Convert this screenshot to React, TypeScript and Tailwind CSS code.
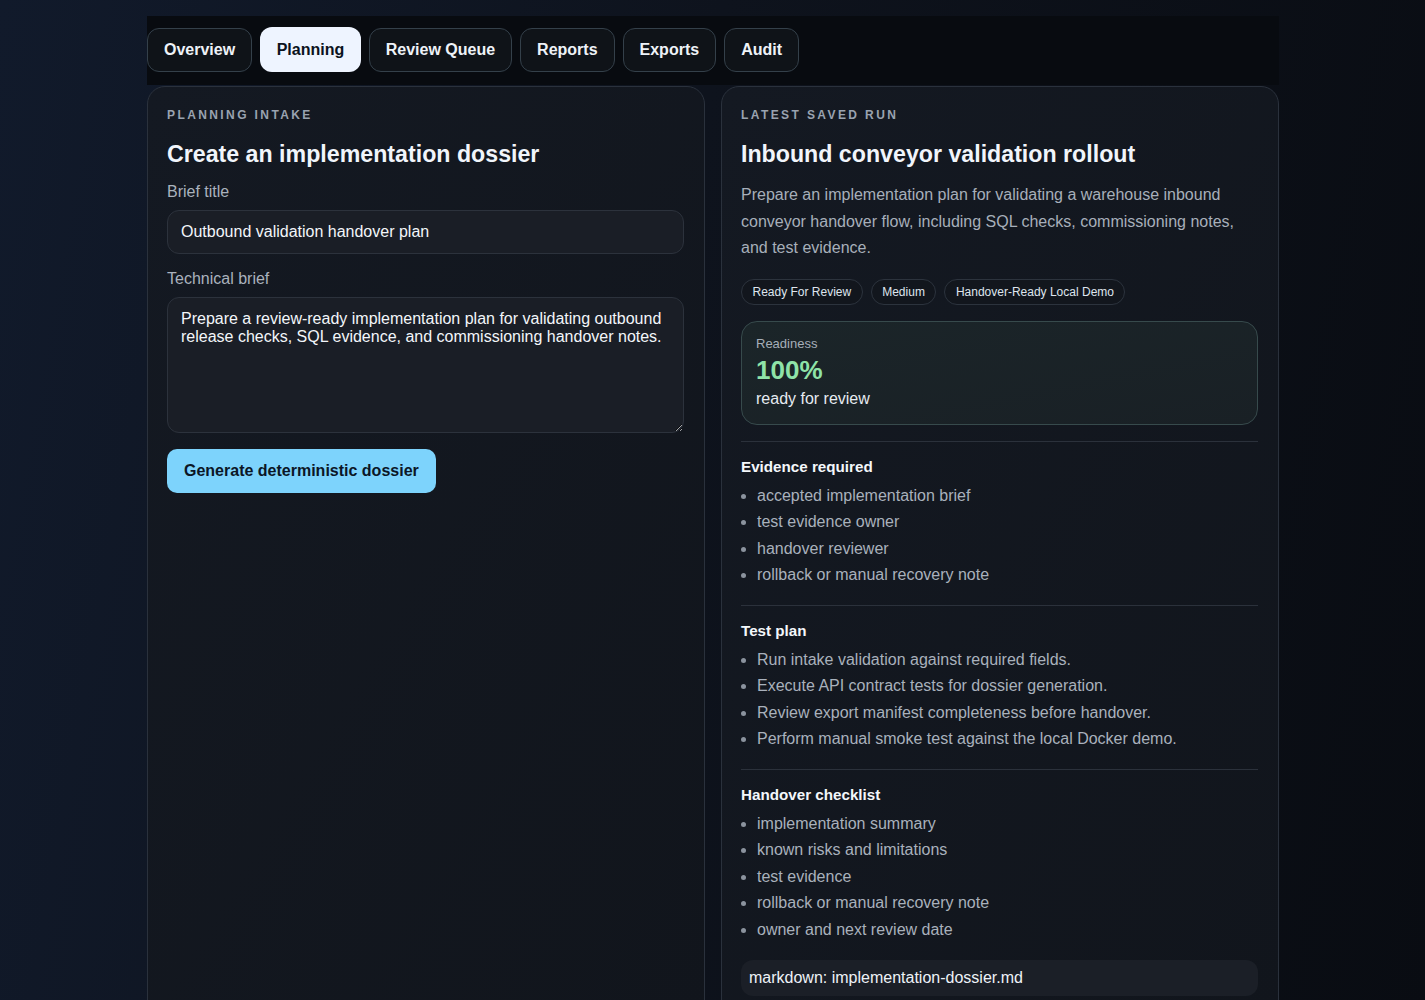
import type { ReactNode } from "react";

const TABS = ["Overview", "Planning", "Review Queue", "Reports", "Exports", "Audit"];
const ACTIVE = "Planning";

const SECTIONS: { title: string; items: string[] }[] = [
  {
    title: "Evidence required",
    items: [
      "accepted implementation brief",
      "test evidence owner",
      "handover reviewer",
      "rollback or manual recovery note",
    ],
  },
  {
    title: "Test plan",
    items: [
      "Run intake validation against required fields.",
      "Execute API contract tests for dossier generation.",
      "Review export manifest completeness before handover.",
      "Perform manual smoke test against the local Docker demo.",
    ],
  },
  {
    title: "Handover checklist",
    items: [
      "implementation summary",
      "known risks and limitations",
      "test evidence",
      "rollback or manual recovery note",
      "owner and next review date",
    ],
  },
];

function Panel({ children }: { children: ReactNode }) {
  return (
    <section className="rounded-[18px] border border-[#2a313c] bg-gradient-to-br from-[#141922] to-[#11151c] pt-5 pr-5 pb-6 pl-[19px]">
      {children}
    </section>
  );
}

function Eyebrow({ children }: { children: ReactNode }) {
  return (
    <div className="text-[12px] font-bold uppercase leading-4 tracking-[0.2em] text-[#9aa3b0]">
      {children}
    </div>
  );
}

function Chip({ children }: { children: ReactNode }) {
  return (
    <span className="flex h-[26px] items-center rounded-full border border-[#2c333d] bg-[#12161d] px-[10.5px] text-[12px] text-[#dfe5ee]">
      {children}
    </span>
  );
}

export default function App() {
  return (
    <div
      className="min-h-screen bg-[linear-gradient(100deg,#111a2b_0%,#0e131d_45%,#090c12_100%)] pt-4 text-white"
      style={{ fontFamily: '"Liberation Sans", Arial, sans-serif' }}
    >
      <div className="ml-[147px] w-[1132px]">
        {/* Tab strip */}
        <nav className="flex gap-2 bg-[#080b10] py-3">
          {TABS.map((tab) =>
            tab === ACTIVE ? (
              <button
                key={tab}
                className="h-[45px] -translate-y-px rounded-[12px] bg-[#eef4ff] px-[16.5px] text-[16px] font-bold text-[#0b1220]"
              >
                {tab}
              </button>
            ) : (
              <button
                key={tab}
                className="h-11 rounded-[12px] border border-[#34404a] bg-[#0f1318] px-4 text-[16px] font-bold text-[#eef2f7]"
              >
                {tab}
              </button>
            )
          )}
        </nav>

        <div className="mt-px grid grid-cols-2 gap-4">
          {/* Left: intake */}
          <Panel>
            <Eyebrow>Planning intake</Eyebrow>
            <h2 className="mt-[17px] text-[23.2px] font-bold leading-7 text-[#f1f5fb]">
              Create an implementation dossier
            </h2>
            <label className="mt-3 block text-[16px] leading-6 text-[#aab2bd]">Brief title</label>
            <div className="mt-1.5 flex h-11 items-center rounded-[12px] border border-[#2c323c] bg-[#1a1e26] px-[13px] text-[16px] text-[#f3f6fa]">
              Outbound validation handover plan
            </div>
            <label className="mt-[13px] block text-[16px] leading-6 text-[#aab2bd]">
              Technical brief
            </label>
            <textarea
              readOnly
              className="mt-1.5 block h-[136px] w-full resize-y rounded-[12px] border border-[#2c323c] bg-[#1a1e26] px-[13px] pt-[12px] text-[16px] leading-[18px] text-[#f3f6fa] outline-none"
              defaultValue="Prepare a review-ready implementation plan for validating outbound release checks, SQL evidence, and commissioning handover notes."
            />
            <button className="mt-4 h-11 rounded-[10px] bg-[#7dd3fc] px-[17px] text-[16px] font-bold text-[#0b1626]">
              Generate deterministic dossier
            </button>
          </Panel>

          {/* Right: latest run */}
          <Panel>
            <Eyebrow>Latest saved run</Eyebrow>
            <h2 className="mt-[17px] text-[23.2px] font-bold leading-7 text-[#f1f5fb]">
              Inbound conveyor validation rollout
            </h2>
            <p className="mt-[14px] text-[16px] leading-[26.5px] text-[#a7afba]">
              Prepare an implementation plan for validating a warehouse inbound conveyor handover
              flow, including SQL checks, commissioning notes, and test evidence.
            </p>
            <div className="mt-[17px] flex gap-2">
              <Chip>Ready For Review</Chip>
              <Chip>Medium</Chip>
              <Chip>Handover-Ready Local Demo</Chip>
            </div>

            <div className="mt-4 rounded-[16px] border border-[#374a4c] bg-gradient-to-br from-[#1b2529] to-[#192025] px-[14px] pt-[13px] pb-[13px]">
              <div className="text-[13px] leading-[18px] text-[#a6afb9]">Readiness</div>
              <div className="text-[26px] font-bold leading-[34px] text-[#8fe3a8]">100%</div>
              <div className="text-[16px] leading-6 text-[#e6ebf1]">ready for review</div>
            </div>

            {SECTIONS.map((s) => (
              <div key={s.title} className="mt-4 border-t border-[#2b313b] pt-[15px]">
                <h3 className="text-[15.2px] font-bold leading-5 text-[#f4f7fb]">{s.title}</h3>
                <ul className="mt-[6px] list-disc pl-4 text-[16px] leading-[26.5px] text-[#a9b1bc] marker:text-[#8b939e]">
                  {s.items.map((it) => (
                    <li key={it}>{it}</li>
                  ))}
                </ul>
              </div>
            ))}

            <div className="mt-[17px] flex h-[36px] items-center rounded-[12px] bg-[#1b1f27] px-2 text-[16px] text-[#eef2f7]">
              markdown: implementation-dossier.md
            </div>
          </Panel>
        </div>
        <div className="h-8" />
      </div>
    </div>
  );
}
